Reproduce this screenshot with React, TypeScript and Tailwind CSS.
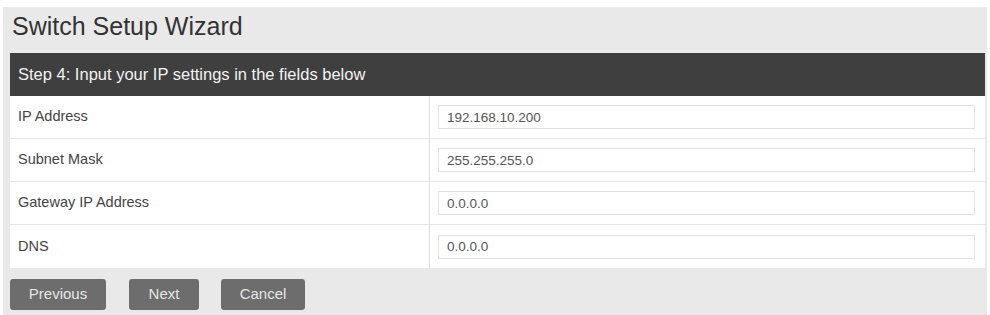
const rows = [
  { label: "IP Address", value: "192.168.10.200" },
  { label: "Subnet Mask", value: "255.255.255.0" },
  { label: "Gateway IP Address", value: "0.0.0.0" },
  { label: "DNS", value: "0.0.0.0" },
];

export default function App() {
  return (
    <div className="h-[315px] w-[990px] bg-white pt-[7px] pl-[3px] pr-[3px] font-['Liberation_Sans',Arial,sans-serif]">
      <div className="h-[308px] bg-[#e9e9e9] pl-[7px] pr-[2px]">
        <h1 className="pl-[2px] pt-[5px] pb-[13px] text-[25px] leading-[28px] text-[#333]">Switch Setup Wizard</h1>
        <div className="flex h-[43px] items-center bg-[#3f3f3f] px-[8px] text-[16.5px] text-[#f2f2f2]">
          Step 4: Input your IP settings in the fields below
        </div>
        <div className="bg-white">
          {rows.map((r, i) => (
            <div
              key={r.label}
              className={`flex h-[43px] ${i < rows.length - 1 ? "border-b border-[#e4e4e4]" : ""}`}
            >
              <div className="flex w-[420px] items-center border-r border-[#dcdcdc] pl-[8px] text-[14.5px] text-[#444]">
                {r.label}
              </div>
              <div className="flex flex-1 items-center pl-[8px] pr-[10px]">
                <input
                  readOnly
                  value={r.value}
                  className="h-[24px] w-full border border-[#e2e2e2] bg-white px-[8px] text-[13.5px] text-[#555] outline-none"
                />
              </div>
            </div>
          ))}
        </div>
        <div className="flex items-center pt-[11px]">
          <button className="h-[31px] w-[96px] rounded-[3px] bg-[#6d6d6d] text-[15px] text-[#e6e6e6]">Previous</button>
          <button className="ml-[23px] h-[31px] w-[70px] rounded-[3px] bg-[#6d6d6d] text-[15px] text-[#e6e6e6]">Next</button>
          <button className="ml-[22px] h-[31px] w-[84px] rounded-[3px] bg-[#6d6d6d] text-[15px] text-[#e6e6e6]">Cancel</button>
        </div>
      </div>
    </div>
  );
}
